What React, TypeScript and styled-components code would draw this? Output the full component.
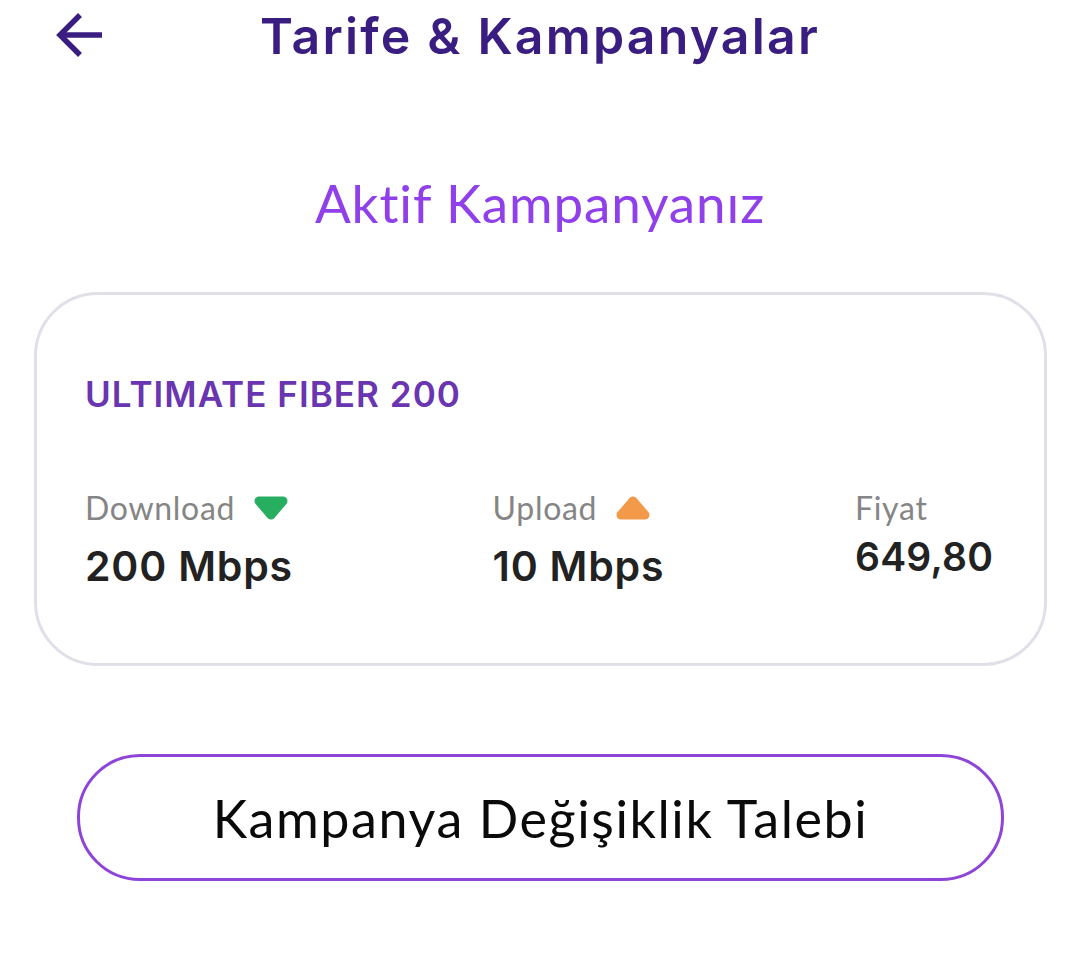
import React from "react"
import styled, { createGlobalStyle } from "styled-components"

const GlobalStyle = createGlobalStyle`
  html, body {
    margin: 0;
    padding: 0;
    background: #fff;
    font-family: "Lato", "Noto Sans", sans-serif;
  }
`

const Page = styled.div`
  width: 1080px;
  height: 968px;
  overflow: hidden;
  background: #fff;
  display: flex;
  flex-direction: column;
`

const Header = styled.header`
  height: 72px;
  padding: 0 0 0 52px;
  display: flex;
  align-items: center;
  color: #3a1d80;
`

const BackButton = styled.button`
  width: 56px;
  height: 56px;
  margin-top: -6px;
  padding: 0;
  border: 0;
  background: none;
  color: inherit;
  display: flex;
`

const Title = styled.h1`
  margin: 0 0 0 152px;
  font-family: "Inter", sans-serif;
  font-size: 50px;
  font-weight: 600;
  line-height: 72px;
  letter-spacing: 2.2px;
  white-space: nowrap;
`

const Subtitle = styled.h2`
  margin: 101px 0 0;
  font-size: 53px;
  font-weight: 400;
  line-height: 60px;
  letter-spacing: 0.9px;
  text-align: center;
  color: #9040ea;
`

const Card = styled.section`
  box-sizing: border-box;
  width: 1013px;
  height: 374px;
  margin: 59px 0 0 34px;
  padding: 77px 48px 0;
  border: 3px solid #dfe0e8;
  border-radius: 64px;
`

const PlanName = styled.div`
  font-family: "Inter", sans-serif;
  font-size: 35px;
  font-weight: 600;
  line-height: 44px;
  color: #6a35b0;
  letter-spacing: 1.05px;
`

const Stats = styled.div`
  margin-top: 75px;
  display: flex;
  justify-content: space-between;
`

const Stat = styled.div<{ $width: number }>`
  width: ${(p) => p.$width}px;
`

const Label = styled.div`
  display: flex;
  align-items: center;
  gap: 18px;
  font-size: 32px;
  line-height: 34px;
  letter-spacing: 0.7px;
  color: #858585;
`

const Value = styled.div<{ $raised?: boolean }>`
  margin-top: ${(p) => (p.$raised ? 7 : 16)}px;
  font-family: "Inter", sans-serif;
  font-size: ${(p) => (p.$raised ? 39 : 41)}px;
  font-weight: 600;
  line-height: 50px;
  letter-spacing: ${(p) => (p.$raised ? 0.2 : 0.8)}px;
  color: #222;
  white-space: nowrap;
`

const Action = styled.button`
  box-sizing: border-box;
  width: 927px;
  height: 127px;
  margin: 88px 0 0 77px;
  border: 3px solid #8e44d8;
  border-radius: 63px;
  background: #fff;
  color: #0a0a0a;
  font-family: "Lato", sans-serif;
  font-size: 52px;
  font-weight: 400;
  letter-spacing: 1.6px;
`

const BackArrow = () => (
  <svg width="56" height="56" viewBox="0 0 56 56" fill="none" stroke="currentColor" strokeWidth="5.5">
    <path d="M9 30 H50" />
    <path d="M28 10 L8 30 L28 50" />
  </svg>
)

const Marker = ({ color, up }: { color: string; up?: boolean }) => (
  <svg width="36" height="26" viewBox="0 0 36 26">
    <path
      d={up ? "M18 6 L30 20 H6 Z" : "M6 6 H30 L18 20 Z"}
      fill={color}
      stroke={color}
      strokeWidth="9"
      strokeLinejoin="round"
    />
  </svg>
)

export default function App() {
  return (
    <Page>
      <GlobalStyle />
      <Header>
        <BackButton aria-label="Geri">
          <BackArrow />
        </BackButton>
        <Title>Tarife &amp; Kampanyalar</Title>
      </Header>
      <Subtitle>Aktif Kampanyanız</Subtitle>
      <Card>
        <PlanName>ULTIMATE FIBER 200</PlanName>
        <Stats>
          <Stat $width={358}>
            <Label>
              Download <Marker color="#27ae60" />
            </Label>
            <Value>200 Mbps</Value>
          </Stat>
          <Stat $width={313}>
            <Label>
              Upload <Marker color="#f2994a" up />
            </Label>
            <Value>10 Mbps</Value>
          </Stat>
          <Stat $width={141}>
            <Label>Fiyat</Label>
            <Value $raised>649,80</Value>
          </Stat>
        </Stats>
      </Card>
      <Action>Kampanya Değişiklik Talebi</Action>
    </Page>
  )
}
